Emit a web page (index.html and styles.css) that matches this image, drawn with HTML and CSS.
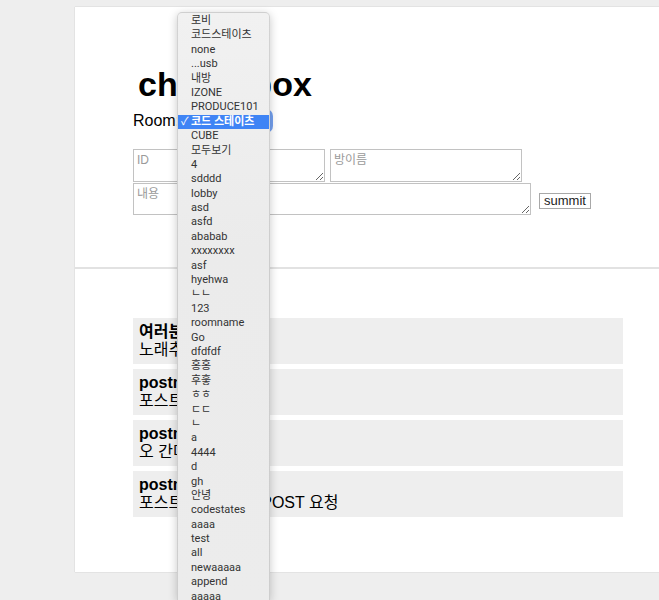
FILE: index.html
```html
<!DOCTYPE html>
<html lang="ko">
<head>
<meta charset="utf-8">
<title>chatterbox</title>
<link rel="stylesheet" href="styles.css">
</head>
<body>
<div class="page">
  <header class="top">
    <h1 class="title">chatterbox</h1>
    <div class="room-row">
      <span class="room-label">Room:</span>
      <select class="room-select" aria-label="room"><option>코드 스테이츠</option></select>
    </div>
    <form class="compose">
      <div class="compose-row">
        <textarea class="field field-id" placeholder="ID"></textarea>
        <textarea class="field field-room" placeholder="방이름"></textarea>
      </div>
      <div class="compose-row">
        <textarea class="field field-text" placeholder="내용"></textarea>
        <button type="button" class="submit">summit</button>
      </div>
    </form>
  </header>
  <section class="messages">
    <div class="msg"><div class="msg-user">여러분</div><div class="msg-text">노래추천</div></div>
    <div class="msg"><div class="msg-user">postman</div><div class="msg-text">포스트맨</div></div>
    <div class="msg"><div class="msg-user">postman</div><div class="msg-text">오 간다</div></div>
    <div class="msg"><div class="msg-user">postman</div><div class="msg-text">포스트맨에서보낸 POST 요청</div></div>
  </section>
</div>

<ul class="popup">
  <li>로비</li>
  <li>코드스테이츠</li>
  <li>none</li>
  <li>...usb</li>
  <li>내방</li>
  <li>IZONE</li>
  <li>PRODUCE101</li>
  <li class="selected">코드 스테이츠</li>
  <li>CUBE</li>
  <li>모두보기</li>
  <li>4</li>
  <li>sdddd</li>
  <li>lobby</li>
  <li>asd</li>
  <li>asfd</li>
  <li>ababab</li>
  <li>xxxxxxxx</li>
  <li>asf</li>
  <li>hyehwa</li>
  <li>ㄴㄴ</li>
  <li>123</li>
  <li>roomname</li>
  <li>Go</li>
  <li>dfdfdf</li>
  <li>홍홍</li>
  <li>후훟</li>
  <li>ㅎㅎ</li>
  <li>ㄷㄷ</li>
  <li>ㄴ</li>
  <li>a</li>
  <li>4444</li>
  <li>d</li>
  <li>gh</li>
  <li>안녕</li>
  <li>codestates</li>
  <li>aaaa</li>
  <li>test</li>
  <li>all</li>
  <li>newaaaaa</li>
  <li>append</li>
  <li>aaaaa</li>
</ul>
</body>
</html>
```

FILE: styles.css
```css
html, body {
  margin: 0;
  padding: 0;
  height: 600px;
  overflow: hidden;
}
body {
  background: #eeeeee;
  font-family: "Liberation Sans", "Noto Sans CJK KR", sans-serif;
  color: #000;
  position: relative;
}
.page {
  margin: 7px 0 0 75px;
  background: #fff;
  box-shadow: 0 0 1px rgba(0,0,0,0.25);
}
.top {
  padding: 57px 0 52px 58px;
  border-bottom: 2px solid #e2e2e2;
}
.title {
  margin: 0;
  padding-left: 5px;
  font-size: 34px;
  line-height: 40px;
  font-weight: bold;
}
.room-row {
  margin-top: 7px;
  display: flex;
  align-items: center;
  height: 20px;
  font-size: 16px;
}
.room-select {
  margin-left: 2px;
  width: 88px;
  height: 18px;
  appearance: none;
  -webkit-appearance: none;
  border: 1px solid #aaa;
  border-radius: 4px;
  background: #fff;
  font-size: 11px;
  box-shadow: 0 0 0 3px rgba(70,130,235,0.75);
}
.compose {
  margin-top: 18px;
  display: flex;
  flex-direction: column;
  gap: 1px;
}
.compose-row {
  display: flex;
  gap: 5px;
}
.field {
  box-sizing: border-box;
  margin: 0;
  padding: 3px 3px;
  border: 1px solid #c2c2c2;
  font-family: "Liberation Sans", "Noto Sans CJK KR", sans-serif;
  font-size: 12px;
  line-height: 14px;
  background: #fff;
}
.field::placeholder {
  color: #9a9a9a;
}
.field-id, .field-room {
  width: 192px;
  height: 33px;
}
.field-text {
  width: 398px;
  height: 32px;
}
.submit {
  align-self: flex-end;
  margin: 0 0 6px 3px;
  width: 52px;
  height: 16px;
  padding: 0;
  border: 1px solid #a8a8a8;
  background: #fff;
  font-family: "Liberation Sans", sans-serif;
  font-size: 13px;
  line-height: 14px;
  color: #222;
}
.messages {
  padding: 49px 0 55px 58px;
  display: flex;
  flex-direction: column;
  gap: 5px;
}
.msg {
  width: 490px;
  box-sizing: border-box;
  padding: 5px 6px;
  background: #eeeeee;
  font-size: 16px;
  line-height: 18px;
}
.msg-user {
  font-weight: bold;
}
.popup {
  position: absolute;
  left: 177px;
  top: 12px;
  width: 93px;
  height: 588px;
  margin: 0;
  padding: 1px 0 0;
  list-style: none;
  box-sizing: border-box;
  overflow: hidden;
  background: linear-gradient(#f1f1f1, #ebebeb 40%, #ececec);
  border: 1px solid rgba(0,0,0,0.12);
  border-bottom: none;
  border-radius: 5px 5px 0 0;
  box-shadow: 0 2px 10px rgba(0,0,0,0.22);
  font-family: Roboto, "Noto Sans CJK KR", sans-serif;
  font-size: 11px;
  color: #333;
}
.popup li {
  position: relative;
  height: 14.4px;
  line-height: 14.4px;
  padding-left: 13px;
  white-space: nowrap;
}
.popup li.selected {
  background: #3f84f5;
  color: #fff;
  font-weight: bold;
}
.popup li.selected::before {
  content: "\2713";
  position: absolute;
  left: 3px;
  top: 0;
  font-weight: normal;
}
```
